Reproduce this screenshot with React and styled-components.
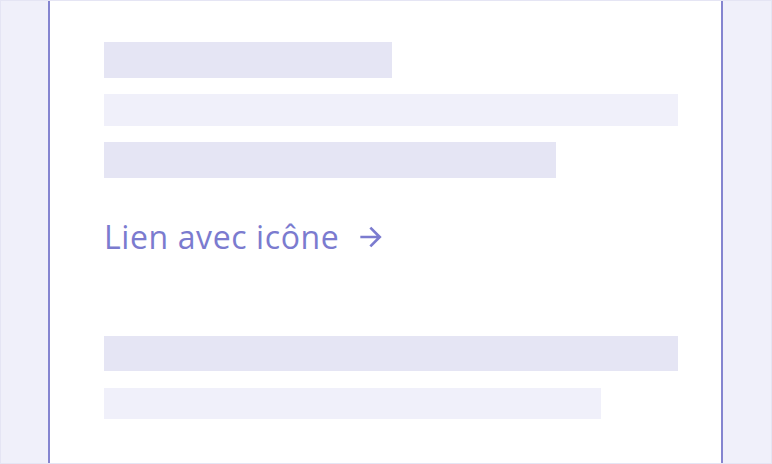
import styled, { createGlobalStyle } from "styled-components";

const GlobalStyle = createGlobalStyle`
  html, body {
    margin: 0;
    padding: 0;
    background: #ffffff;
  }
`

const Frame = styled.div`
  width: 772px;
  height: 464px;
  box-sizing: border-box;
  border: 1px solid #e5e5f4;
  display: grid;
  grid-template-columns: 47px 2px 1fr 2px 48px;
  background: #ffffff;
`

const SidePanel = styled.div`
  background-color: #f0f0fa;
`

const Rule = styled.div`
  background-color: #8585d0;
`

const Content = styled.main`
  padding: 41px 0 0 54px;
  display: flex;
  flex-direction: column;
  align-items: flex-start;
`

const Bar = styled.div`
  width: ${(p) => p.$width}px;
  height: ${(p) => p.$height}px;
  margin-bottom: ${(p) => p.$gap || 0}px;
  background-color: ${(p) => (p.$light ? "#f0f0fa" : "#e5e5f4")};
`

const IconLink = styled.a`
  display: flex;
  align-items: center;
  gap: 16px;
  margin: 0 0 79px 0;
  height: 40px;
  line-height: 40px;
  font-family: "Open Sans", "Noto Sans", sans-serif;
  font-size: 32px;
  letter-spacing: 0.6px;
  color: #7b7bcf;
  text-decoration: none;
  cursor: pointer;
`

const ArrowRight = () => (
  <svg width="32" height="32" viewBox="0 0 24 24" fill="#7b7bcf">
    <path d="M16.172 11l-5.364-5.364 1.414-1.414L20 12l-7.778 7.778-1.414-1.414L16.172 13H4v-2z" />
  </svg>
);

export default function App() {
  return (
    <>
      <GlobalStyle />
      <Frame>
        <SidePanel />
        <Rule />
        <Content>
          <Bar $width={288} $height={36} $gap={16} />
          <Bar $width={574} $height={32} $gap={16} $light />
          <Bar $width={452} $height={36} $gap={39} />
          <IconLink>
            Lien avec icône
            <ArrowRight />
          </IconLink>
          <Bar $width={574} $height={35} $gap={17} />
          <Bar $width={497} $height={31} $light />
        </Content>
        <Rule />
        <SidePanel />
      </Frame>
    </>
  );
}
